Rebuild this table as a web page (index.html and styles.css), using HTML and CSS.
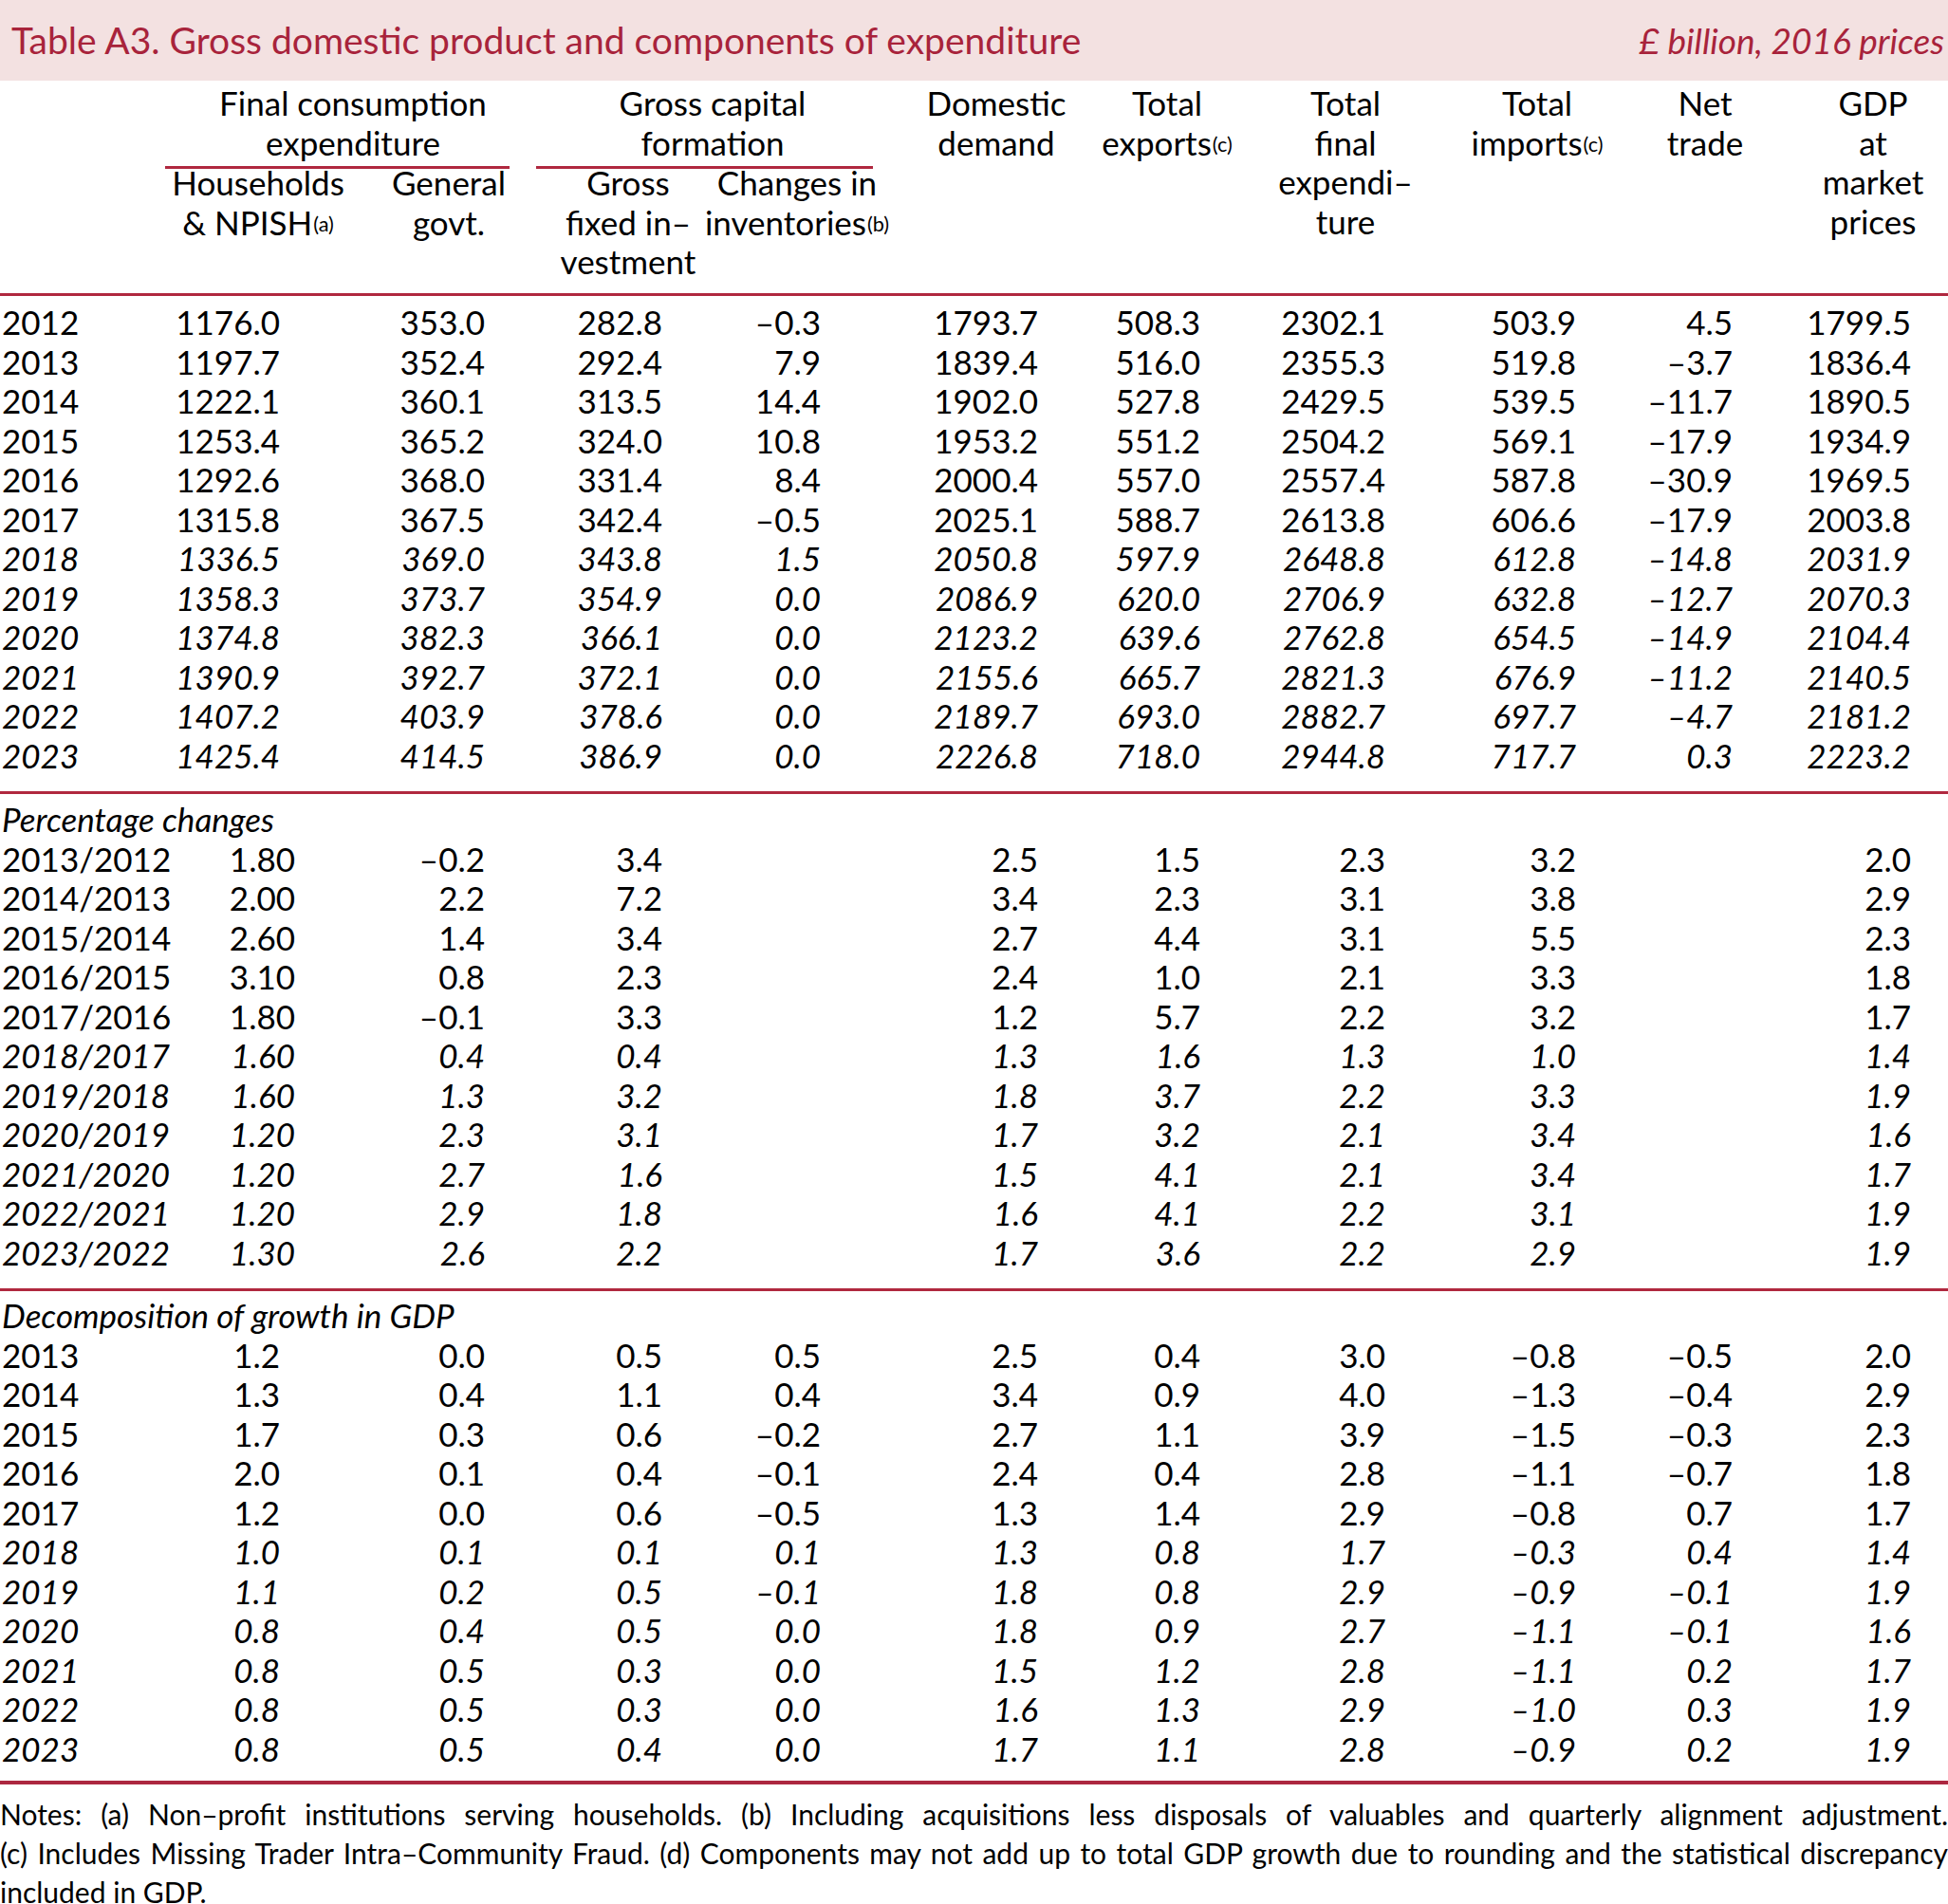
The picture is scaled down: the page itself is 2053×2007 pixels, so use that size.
FILE: index.html
```html
<!DOCTYPE html>
<html lang="en">
<head>
<meta charset="utf-8">
<title>Table A3</title>
<link rel="stylesheet" href="styles.css">
</head>
<body>
<div class="page">
  <header class="titlebar">
    <h1 class="title">Table A3. Gross domestic product and components of expenditure</h1>
    <span class="units">£ billion, 2016 prices</span>
  </header>

  <div class="colheads">
    <div class="spacer"></div>
    <div class="group g1">
      <div class="gtitle"><div>Final consumption</div><div>expenditure</div></div>
      <div class="subrow">
        <div class="hc h-hh"><div>Households</div><div>&amp; NPISH<span class="sup">(a)</span></div></div>
        <div class="hc h-gg"><div>General</div><div>govt.</div></div>
      </div>
    </div>
    <div class="group g2">
      <div class="gtitle"><div>Gross capital</div><div>formation</div></div>
      <div class="subrow">
        <div class="hc h-gf"><div>Gross</div><div>fixed in–</div><div>vestment</div></div>
        <div class="hc h-ci"><div>Changes in</div><div>inventories<span class="sup">(b)</span></div></div>
      </div>
    </div>
    <div class="hc h-dd"><div>Domestic</div><div>demand</div></div>
    <div class="hc h-ex"><div>Total</div><div>exports<span class="sup">(c)</span></div></div>
    <div class="hc h-tf"><div>Total</div><div>final</div><div>expendi–</div><div>ture</div></div>
    <div class="hc h-im"><div>Total</div><div>imports<span class="sup">(c)</span></div></div>
    <div class="hc h-nt"><div>Net</div><div>trade</div></div>
    <div class="hc h-gdp"><div>GDP</div><div>at</div><div>market</div><div>prices</div></div>
  </div>

  <section class="block levels">
    <div class="row"><span class="lab">2012</span><span>1176.0</span><span>353.0</span><span>282.8</span><span>–0.3</span><span>1793.7</span><span>508.3</span><span>2302.1</span><span>503.9</span><span>4.5</span><span>1799.5</span></div>
    <div class="row"><span class="lab">2013</span><span>1197.7</span><span>352.4</span><span>292.4</span><span>7.9</span><span>1839.4</span><span>516.0</span><span>2355.3</span><span>519.8</span><span>–3.7</span><span>1836.4</span></div>
    <div class="row"><span class="lab">2014</span><span>1222.1</span><span>360.1</span><span>313.5</span><span>14.4</span><span>1902.0</span><span>527.8</span><span>2429.5</span><span>539.5</span><span>–11.7</span><span>1890.5</span></div>
    <div class="row"><span class="lab">2015</span><span>1253.4</span><span>365.2</span><span>324.0</span><span>10.8</span><span>1953.2</span><span>551.2</span><span>2504.2</span><span>569.1</span><span>–17.9</span><span>1934.9</span></div>
    <div class="row"><span class="lab">2016</span><span>1292.6</span><span>368.0</span><span>331.4</span><span>8.4</span><span>2000.4</span><span>557.0</span><span>2557.4</span><span>587.8</span><span>–30.9</span><span>1969.5</span></div>
    <div class="row"><span class="lab">2017</span><span>1315.8</span><span>367.5</span><span>342.4</span><span>–0.5</span><span>2025.1</span><span>588.7</span><span>2613.8</span><span>606.6</span><span>–17.9</span><span>2003.8</span></div>
    <div class="row f"><span class="lab">2018</span><span>1336.5</span><span>369.0</span><span>343.8</span><span>1.5</span><span>2050.8</span><span>597.9</span><span>2648.8</span><span>612.8</span><span>–14.8</span><span>2031.9</span></div>
    <div class="row f"><span class="lab">2019</span><span>1358.3</span><span>373.7</span><span>354.9</span><span>0.0</span><span>2086.9</span><span>620.0</span><span>2706.9</span><span>632.8</span><span>–12.7</span><span>2070.3</span></div>
    <div class="row f"><span class="lab">2020</span><span>1374.8</span><span>382.3</span><span>366.1</span><span>0.0</span><span>2123.2</span><span>639.6</span><span>2762.8</span><span>654.5</span><span>–14.9</span><span>2104.4</span></div>
    <div class="row f"><span class="lab">2021</span><span>1390.9</span><span>392.7</span><span>372.1</span><span>0.0</span><span>2155.6</span><span>665.7</span><span>2821.3</span><span>676.9</span><span>–11.2</span><span>2140.5</span></div>
    <div class="row f"><span class="lab">2022</span><span>1407.2</span><span>403.9</span><span>378.6</span><span>0.0</span><span>2189.7</span><span>693.0</span><span>2882.7</span><span>697.7</span><span>–4.7</span><span>2181.2</span></div>
    <div class="row f"><span class="lab">2023</span><span>1425.4</span><span>414.5</span><span>386.9</span><span>0.0</span><span>2226.8</span><span>718.0</span><span>2944.8</span><span>717.7</span><span>0.3</span><span>2223.2</span></div>
  </section>

  <section class="block pct">
    <div class="sechead">Percentage changes</div>
    <div class="row"><span class="lab">2013/2012</span><span>1.80</span><span>–0.2</span><span>3.4</span><span></span><span>2.5</span><span>1.5</span><span>2.3</span><span>3.2</span><span></span><span>2.0</span></div>
    <div class="row"><span class="lab">2014/2013</span><span>2.00</span><span>2.2</span><span>7.2</span><span></span><span>3.4</span><span>2.3</span><span>3.1</span><span>3.8</span><span></span><span>2.9</span></div>
    <div class="row"><span class="lab">2015/2014</span><span>2.60</span><span>1.4</span><span>3.4</span><span></span><span>2.7</span><span>4.4</span><span>3.1</span><span>5.5</span><span></span><span>2.3</span></div>
    <div class="row"><span class="lab">2016/2015</span><span>3.10</span><span>0.8</span><span>2.3</span><span></span><span>2.4</span><span>1.0</span><span>2.1</span><span>3.3</span><span></span><span>1.8</span></div>
    <div class="row"><span class="lab">2017/2016</span><span>1.80</span><span>–0.1</span><span>3.3</span><span></span><span>1.2</span><span>5.7</span><span>2.2</span><span>3.2</span><span></span><span>1.7</span></div>
    <div class="row f"><span class="lab">2018/2017</span><span>1.60</span><span>0.4</span><span>0.4</span><span></span><span>1.3</span><span>1.6</span><span>1.3</span><span>1.0</span><span></span><span>1.4</span></div>
    <div class="row f"><span class="lab">2019/2018</span><span>1.60</span><span>1.3</span><span>3.2</span><span></span><span>1.8</span><span>3.7</span><span>2.2</span><span>3.3</span><span></span><span>1.9</span></div>
    <div class="row f"><span class="lab">2020/2019</span><span>1.20</span><span>2.3</span><span>3.1</span><span></span><span>1.7</span><span>3.2</span><span>2.1</span><span>3.4</span><span></span><span>1.6</span></div>
    <div class="row f"><span class="lab">2021/2020</span><span>1.20</span><span>2.7</span><span>1.6</span><span></span><span>1.5</span><span>4.1</span><span>2.1</span><span>3.4</span><span></span><span>1.7</span></div>
    <div class="row f"><span class="lab">2022/2021</span><span>1.20</span><span>2.9</span><span>1.8</span><span></span><span>1.6</span><span>4.1</span><span>2.2</span><span>3.1</span><span></span><span>1.9</span></div>
    <div class="row f"><span class="lab">2023/2022</span><span>1.30</span><span>2.6</span><span>2.2</span><span></span><span>1.7</span><span>3.6</span><span>2.2</span><span>2.9</span><span></span><span>1.9</span></div>
  </section>

  <section class="block decomp">
    <div class="sechead">Decomposition of growth in GDP</div>
    <div class="row"><span class="lab">2013</span><span>1.2</span><span>0.0</span><span>0.5</span><span>0.5</span><span>2.5</span><span>0.4</span><span>3.0</span><span>–0.8</span><span>–0.5</span><span>2.0</span></div>
    <div class="row"><span class="lab">2014</span><span>1.3</span><span>0.4</span><span>1.1</span><span>0.4</span><span>3.4</span><span>0.9</span><span>4.0</span><span>–1.3</span><span>–0.4</span><span>2.9</span></div>
    <div class="row"><span class="lab">2015</span><span>1.7</span><span>0.3</span><span>0.6</span><span>–0.2</span><span>2.7</span><span>1.1</span><span>3.9</span><span>–1.5</span><span>–0.3</span><span>2.3</span></div>
    <div class="row"><span class="lab">2016</span><span>2.0</span><span>0.1</span><span>0.4</span><span>–0.1</span><span>2.4</span><span>0.4</span><span>2.8</span><span>–1.1</span><span>–0.7</span><span>1.8</span></div>
    <div class="row"><span class="lab">2017</span><span>1.2</span><span>0.0</span><span>0.6</span><span>–0.5</span><span>1.3</span><span>1.4</span><span>2.9</span><span>–0.8</span><span>0.7</span><span>1.7</span></div>
    <div class="row f"><span class="lab">2018</span><span>1.0</span><span>0.1</span><span>0.1</span><span>0.1</span><span>1.3</span><span>0.8</span><span>1.7</span><span>–0.3</span><span>0.4</span><span>1.4</span></div>
    <div class="row f"><span class="lab">2019</span><span>1.1</span><span>0.2</span><span>0.5</span><span>–0.1</span><span>1.8</span><span>0.8</span><span>2.9</span><span>–0.9</span><span>–0.1</span><span>1.9</span></div>
    <div class="row f"><span class="lab">2020</span><span>0.8</span><span>0.4</span><span>0.5</span><span>0.0</span><span>1.8</span><span>0.9</span><span>2.7</span><span>–1.1</span><span>–0.1</span><span>1.6</span></div>
    <div class="row f"><span class="lab">2021</span><span>0.8</span><span>0.5</span><span>0.3</span><span>0.0</span><span>1.5</span><span>1.2</span><span>2.8</span><span>–1.1</span><span>0.2</span><span>1.7</span></div>
    <div class="row f"><span class="lab">2022</span><span>0.8</span><span>0.5</span><span>0.3</span><span>0.0</span><span>1.6</span><span>1.3</span><span>2.9</span><span>–1.0</span><span>0.3</span><span>1.9</span></div>
    <div class="row f"><span class="lab">2023</span><span>0.8</span><span>0.5</span><span>0.4</span><span>0.0</span><span>1.7</span><span>1.1</span><span>2.8</span><span>–0.9</span><span>0.2</span><span>1.9</span></div>
  </section>

  <footer class="notes">
    <p class="nl jl">Notes: (a) Non–profit institutions serving households. (b) Including acquisitions less disposals of valuables and quarterly alignment adjustment.</p>
    <p class="nl jl">(c) Includes Missing Trader Intra–Community Fraud. (d) Components may not add up to total GDP growth due to rounding and the statistical discrepancy</p>
    <p class="nl">included in GDP.</p>
  </footer>
</div>
</body>
</html>
```

FILE: styles.css
```css
* {
  box-sizing: border-box;
  margin: 0;
  padding: 0;
}

html, body {
  background: #ffffff;
}

body {
  width: 2053px;
  overflow: hidden;
  font-family: Lato, "Open Sans", "DejaVu Sans", sans-serif;
  color: #000000;
}

.page {
  width: 2053px;
}

/* Title band */
.titlebar {
  display: flex;
  justify-content: space-between;
  align-items: baseline;
  height: 85px;
  padding: 0 4px 0 12px;
  background: #f3e1e1;
  color: #a8233b;
  line-height: 85px;
}

.title {
  font-size: 39px;
  font-weight: 400;
}

.units {
  font-size: 37px;
  font-style: italic;
}

/* Column headings */
.colheads {
  display: flex;
  height: 224px;
  padding-top: 3px;
  font-size: 35px;
  line-height: 41.5px;
}

.spacer {
  flex: none;
  width: 174px;
}

.group {
  flex: none;
  display: flex;
  flex-direction: column;
}

.g1 {
  width: 363px;
}

.g2 {
  width: 355px;
  margin-left: 28px;
}

.gtitle {
  display: flex;
  flex-direction: column;
  align-items: center;
  white-space: nowrap;
  padding-bottom: 4px;
  border-bottom: 3px solid #b0283f;
}

.g1 .gtitle {
  padding-left: 33px;
}

.g2 .gtitle {
  padding-left: 17px;
}

.subrow {
  display: flex;
  margin-top: -6px;
}

.hc {
  flex: none;
  display: flex;
  flex-direction: column;
  align-items: center;
  white-space: nowrap;
}

.h-hh { width: 196px; }
.h-gg { width: 128px; margin-left: 39px; }
.h-gf { width: 194px; }
.h-ci { width: 162px; }
.h-dd { width: 180px; margin-left: 40px; }
.h-ex { width: 180px; }
.h-tf { width: 196px; }
.h-im { width: 192px; margin-left: 8px; }
.h-nt { width: 162px; }
.h-gdp { width: 158px; margin-left: 17px; }

.sup {
  font-size: 0.62em;
  vertical-align: 4px;
  line-height: 1;
  margin-left: 1px;
}

/* Body blocks */
.block {
  border-top: 3px solid #b0283f;
}

.levels {
  padding: 7px 0 17px;
}

.pct {
  padding: 6px 0 17px;
}

.decomp {
  padding: 5px 0 13px;
}

.row {
  display: grid;
  grid-template-columns: 180px 115px 216px 187px 167px 229px 171px 195px 201px 165px 188px;
  height: 41.5px;
  font-size: 35px;
  line-height: 41.5px;
}

.row > span {
  text-align: right;
  white-space: nowrap;
}

.row > .lab {
  text-align: left;
  padding-left: 2px;
}

.pct .row > span:nth-child(2) {
  margin-right: -16px;
}

.row.f {
  font-style: italic;
}

.sechead {
  height: 41.5px;
  padding-left: 2px;
  font-size: 35px;
  line-height: 41.5px;
  font-style: italic;
}

/* Notes */
.notes {
  border-top: 4px solid #ac2740;
  padding-top: 11px;
  font-size: 30px;
  line-height: 41px;
}

.nl {
  display: block;
  white-space: nowrap;
}

.jl {
  text-align: justify;
  text-align-last: justify;
}
```
